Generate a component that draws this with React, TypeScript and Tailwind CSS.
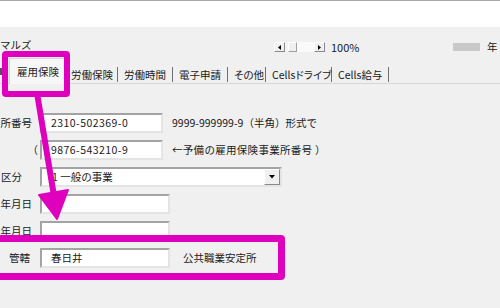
import React from "react";

const font = "font-['Noto_Sans_CJK_JP','Noto_Sans',sans-serif]";

function Sunken({ w, children, className = "" }: { w: string; children?: React.ReactNode; className?: string }) {
  return (
    <div
      className={`${w} h-[20px] bg-white border-2 border-t-[#a3a3a3] border-l-[#a3a3a3] border-b-[#e4e4e4] border-r-[#e4e4e4] flex items-center ${className}`}
    >
      {children}
    </div>
  );
}

function Label({ text, pr }: { text: string; pr: string }) {
  return (
    <div className={`w-[40px] shrink-0 flex justify-end whitespace-nowrap ${pr}`}>
      <span className="shrink-0">{text}</span>
    </div>
  );
}

function ScrollBtn({ dir }: { dir: "l" | "r" }) {
  return (
    <div className="w-[11px] h-[10px] bg-[#f0f0f0] border border-t-white border-l-white border-b-[#8a8a8a] border-r-[#8a8a8a] flex items-center justify-center">
      <svg width="3" height="5" viewBox="0 0 3 5">
        {dir === "l" ? <polygon points="3,0 0,2.5 3,5" fill="#000" /> : <polygon points="0,0 3,2.5 0,5" fill="#000" />}
      </svg>
    </div>
  );
}

export default function App() {
  const tabs: { t: string; w: string }[] = [
    { t: "労働保険", w: "w-[53px]" },
    { t: "労働時間", w: "w-[55px]" },
    { t: "電子申請", w: "w-[55px]" },
    { t: "その他", w: "w-[38px]" },
    { t: "Cellsドライブ", w: "w-[66px]" },
    { t: "Cells給与", w: "w-[57px]" },
  ];
  return (
    <div className={`relative w-[500px] h-[308px] overflow-hidden bg-[#f0f0f0] text-[#1a1a1a] text-[10.5px] leading-[14px] ${font}`}>
      {/* top white area */}
      <div className="h-[27px] bg-white border-t border-[#a8a8a8]" />

      {/* toolbar */}
      <div className="h-[30px] pt-[10px] flex items-center whitespace-nowrap">
        <div className="w-[274px] shrink-0 pb-[4px]">
          <span>マルズ</span>
        </div>
        <div className="w-[51px] shrink-0 flex items-center bg-[#f4f4f4]">
          <ScrollBtn dir="l" />
          <div className="ml-[3px] w-[9px] h-[10px] bg-[#f0f0f0] border border-t-white border-l-white border-b-[#a0a0a0] border-r-[#a0a0a0]" />
          <div className="w-[17px] h-[10px] bg-[#fafafa]" />
          <ScrollBtn dir="r" />
        </div>
        <div className="w-[128px] shrink-0 pl-[6px] text-[11px]">100%</div>
        <div className="w-[27px] h-[8px] shrink-0 bg-[#c9c9c9]" />
        <div className="ml-[7px] shrink-0">年</div>
      </div>

      {/* tabs */}
      <div className="h-[27px] flex items-end border-b border-[#d6d6d6] whitespace-nowrap [font-feature-settings:'palt']">
        <div className="w-[2px] h-[7px] bg-[#555] mb-[8px] shrink-0" />
        <div className="ml-[7px] w-[56px] h-[26px] -mb-px shrink-0 bg-[#f7f7f7] border border-b-0 border-[#d6d6d6] flex items-center pl-[7px] pt-[1px]">
          雇用保険
        </div>
        {tabs.map((tab) => (
          <div key={tab.t} className={`${tab.w} h-[15px] mb-px shrink-0 border-r border-[#707070] flex items-center pl-[6px] pt-[1px]`}>
            {tab.t}
          </div>
        ))}
      </div>

      {/* form */}
      <div className="mt-[29px] flex flex-col gap-[7px] whitespace-nowrap">
        <div className="flex items-center h-[20px]">
          <Label text="所番号" pr="pr-[8px]" />
          <Sunken w="w-[123px]">
            <span className="pl-[9px] tracking-[0.45px]">2310-502369-0</span>
          </Sunken>
          <span className="ml-[9px]">9999-999999-9（半角）形式で</span>
        </div>
        <div className="flex items-center h-[20px]">
          <Label text="（" pr="pr-[2px]" />
          <Sunken w="w-[123px]">
            <span className="pl-[9px] tracking-[0.45px]">9876-543210-9</span>
          </Sunken>
          <span className="ml-[9px] tracking-[0.3px]">←予備の雇用保険事業所番号 ）</span>
        </div>
        <div className="flex items-center h-[20px]">
          <Label text="区分" pr="pr-[18px]" />
          <Sunken w="w-[242px]" className="justify-between">
            <span className="pl-[10px]">1 一般の事業</span>
            <div className="w-[16px] h-[16px] bg-[#f0f0f0] border border-t-white border-l-white border-b-[#8a8a8a] border-r-[#8a8a8a] flex items-center justify-center">
              <svg width="6" height="4" viewBox="0 0 6 4">
                <polygon points="0,0 6,0 3,3.5" fill="#000" />
              </svg>
            </div>
          </Sunken>
        </div>
        <div className="flex items-center h-[20px]">
          <Label text="年月日" pr="pr-[8px]" />
          <Sunken w="w-[130px]" />
        </div>
        <div className="flex items-center h-[20px]">
          <Label text="年月日" pr="pr-[8px]" />
          <Sunken w="w-[130px]" />
        </div>
        <div className="flex items-center h-[20px]">
          <Label text="管轄" pr="pr-[10px]" />
          <Sunken w="w-[130px]">
            <span className="pl-[9px]">春日井</span>
          </Sunken>
          <span className="ml-[13px]">公共職業安定所</span>
        </div>
      </div>

      {/* highlight overlays */}
      <div className="absolute left-[2px] top-[51px] w-[68px] h-[46px] border-[6px] border-[#df00bd] rounded-[4px] pointer-events-none" />
      <div className="absolute left-[-12px] top-[235px] w-[297px] h-[45px] border-[7px] border-[#df00bd] rounded-[4px] pointer-events-none" />
      <svg className="absolute inset-0 pointer-events-none" width="500" height="308" viewBox="0 0 500 308">
        <line x1="37.5" y1="96" x2="54" y2="196" stroke="#df00bd" strokeWidth="6" />
        <polygon points="39,195 68,190 57,219" fill="#df00bd" stroke="#df00bd" strokeWidth="2" strokeLinejoin="round" />
      </svg>
    </div>
  );
}
